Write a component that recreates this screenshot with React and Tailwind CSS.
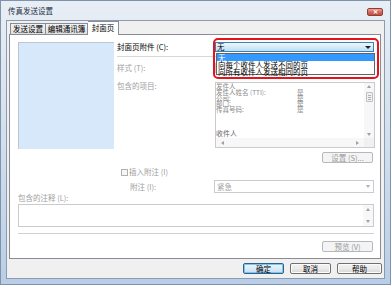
import React from "react";

const Down = ({ c = "border-t-[#404040]" }) => (
  <span className={`w-0 h-0 border-x-[3px] border-x-transparent border-t-[3px] ${c}`} />
);
const Up = ({ c = "border-b-[#a0a0a0]" }) => (
  <span className={`w-0 h-0 border-x-[2.5px] border-x-transparent border-b-[3px] ${c}`} />
);
const DownS = ({ c = "border-t-[#a0a0a0]" }) => (
  <span className={`w-0 h-0 border-x-[2.5px] border-x-transparent border-t-[3px] ${c}`} />
);
const Left = () => (
  <span className="w-0 h-0 border-y-[2.5px] border-y-transparent border-r-[3px] border-r-[#a0a0a0]" />
);
const Right = () => (
  <span className="w-0 h-0 border-y-[2.5px] border-y-transparent border-l-[3px] border-l-[#a0a0a0]" />
);

function Btn({ children, w, kind }) {
  const base = "h-[11px] flex items-center justify-center rounded-[2px] text-[7.5px] leading-none";
  if (kind === "disabled")
    return (
      <div className={`${base} h-[10px] ${w} border border-[#b6b9bb] bg-[#f4f4f4] text-[#9a9a9a]`}>{children}</div>
    );
  if (kind === "default")
    return (
      <div className={`${base} ${w} border border-[#2c628b] bg-gradient-to-b from-[#eaf5fc] via-[#dcecf8] to-[#c3def2] shadow-[inset_0_0_0_1px_#7fc6ee] text-black`}>{children}</div>
    );
  return (
    <div className={`${base} ${w} border border-[#707070] bg-gradient-to-b from-[#f2f2f2] via-[#ebebeb] to-[#d6d6d6] shadow-[inset_0_0_0_1px_#fcfcfc] text-black`}>{children}</div>
  );
}

export default function App() {
  return (
    <div className="relative w-[391px] h-[285px] overflow-hidden flex flex-col bg-gradient-to-b from-[#e8eef5] via-[#d2dfec] to-[#b9cee6] border border-[#7f93ab] font-['Noto_Sans_CJK_SC','Noto_Sans',sans-serif] text-black">
      {/* title bar */}
      <div className="h-[19px] flex items-start justify-between shrink-0">
        <div className="pl-[7px] pt-[5px] text-[7.5px] leading-[10px] text-[#1e2f45]">传真发送设置</div>
        <div className="mr-[7px] mt-[7px] w-[16px] h-[8px] rounded-[2px] border border-[#8c3f38] bg-gradient-to-b from-[#e8a59b] via-[#d46b5e] to-[#c24a3c] flex items-center justify-center">
          <span className="text-white text-[6px] leading-none font-bold">✕</span>
        </div>
      </div>

      {/* client */}
      <div className="mx-[5px] h-[259px] shrink-0 bg-[#f0f0f0] border border-[#8a9cb2] flex flex-col">
        {/* tabs */}
        <div className="h-[13px] flex items-end pl-[3px] shrink-0">
          <div className="w-[36px] h-[11px] border border-b-0 border-[#898c95] bg-gradient-to-b from-[#f2f2f2] to-[#e0e0e0] text-[7.5px] leading-[10px] flex items-center justify-center">发送设置</div>
          <div className="w-[42px] h-[11px] border border-l-0 border-b-0 border-[#898c95] bg-gradient-to-b from-[#f2f2f2] to-[#e0e0e0] text-[7.5px] leading-[10px] flex items-center justify-center">编辑通讯簿</div>
          <div className="relative z-10 -mb-px w-[31px] h-[14px] border border-b-0 border-l-0 border-[#898c95] bg-white text-[7.5px] leading-[10px] flex items-center justify-center pb-[1px]">封面页</div>
        </div>

        {/* panel */}
        <div className="ml-[2px] w-[372px] h-[225px] shrink-0 bg-white border border-[#898c95] flex flex-col">
          <div className="flex pt-[7px] pl-[8px]">
            <div className="w-[96px] h-[107px] bg-[#d7e8fb] border-l border-t border-[#b9c8d8]" />
            <div className="ml-[3px] w-[258px] flex flex-col">
              <div className="flex items-center h-[10px]">
                <div className="w-[98px] text-[7.5px] leading-[10px]">封面页附件 (C):</div>
                <div className="w-[159px] h-[10px] border border-[#3c7fb1] bg-gradient-to-b from-[#eef7fd] to-[#bfdff5] flex items-center justify-between pl-[1px] pr-[2px]">
                  <span className="text-[7.5px] leading-none">无</span>
                  <Down c="border-t-[#202020]" />
                </div>
              </div>
              <div className="mt-[4px] h-px w-full bg-[#d8d8d8]" />
              <div className="mt-[6px] flex items-center h-[10px]">
                <div className="w-[98px] text-[7.5px] leading-[10px] text-[#a0a0a0]">样式 (T):</div>
                <div className="w-[159px] h-[10px] border border-[#c8c8c8]" />
              </div>
              <div className="mt-[9px] flex">
                <div className="w-[98px] -mt-[1px] text-[7.5px] leading-[10px] text-[#a0a0a0]">包含的项目:</div>
                <div className="w-[160px] h-[66px] border border-[#c9cbcf] flex flex-col">
                  <div className="flex flex-1 min-h-0">
                    <div className="flex-1 pt-[1px] text-[6.5px] text-[#8a8a8a]">
                      <div className="leading-[5.75px] h-[5.75px]">发件人</div>
                      <div className="leading-[5.75px] h-[5.75px] flex"><span className="w-[81px]">发件人姓名 (TTI):</span><span>是</span></div>
                      <div className="leading-[5.75px] h-[5.75px] flex"><span className="w-[81px]">公司:</span><span>是</span></div>
                      <div className="leading-[5.75px] h-[5.75px] flex"><span className="w-[81px]">部门:</span><span>是</span></div>
                      <div className="leading-[5.75px] h-[5.75px] flex"><span className="w-[81px]">传真号码:</span><span>是</span></div>
                      <div className="mt-[17px] text-[7px] leading-[7px] text-[#6a6a6a]">收件人</div>
                    </div>
                    <div className="w-[10px] bg-[#f7f7f7] flex flex-col items-center">
                      <div className="h-[7px] flex items-center"><Up /></div>
                      <div className="mt-[2px] w-[7px] h-[10px] border border-[#c0c0c0] bg-[#f0f0f0] rounded-[1px] flex flex-col items-center justify-center gap-[1px]">
                        <span className="w-[3px] h-px bg-[#b0b0b0]" />
                        <span className="w-[3px] h-px bg-[#b0b0b0]" />
                        <span className="w-[3px] h-px bg-[#b0b0b0]" />
                      </div>
                      <div className="flex-1" />
                      <div className="h-[7px] flex items-center"><DownS /></div>
                    </div>
                  </div>
                  <div className="h-[9px] flex bg-[#f7f7f7]">
                    <div className="flex-1 flex items-center justify-between px-[5px]">
                      <Left />
                      <Right />
                    </div>
                    <div className="w-[10px] bg-[#f0f0f0]" />
                  </div>
                </div>
              </div>
              <div className="mt-[4px] self-end mr-[2px]">
                <Btn w="w-[51px]" kind="disabled">设置 (S)...</Btn>
              </div>
            </div>
          </div>

          <div className="mt-[5px] pl-[111px] flex items-center h-[8px]">
            <span className="w-[7px] h-[7px] border border-[#b0b0b0] bg-[#f6f6f6]" />
            <span className="ml-[1px] text-[7.5px] leading-[8px] text-[#a0a0a0]">插入附注 (I)</span>
          </div>
          <div className="mt-[4px] pl-[120px] flex items-center h-[13px]">
            <div className="w-[84px] text-[7.5px] leading-[10px] text-[#a0a0a0]">附注 (I):</div>
            <div className="w-[160px] h-[13px] border border-[#c9cbcf] flex items-center justify-between pl-[2px] pr-[3px]">
              <span className="text-[7.5px] leading-none text-[#a0a0a0]">紧急</span>
              <DownS c="border-t-[#b0b0b0]" />
            </div>
          </div>
          <div className="pl-[8px] text-[7.5px] leading-[10px] h-[10px] text-[#a0a0a0]">包含的注释 (L):</div>
          <div className="mt-[1px] ml-[8px] w-[356px] h-[23px] border border-[#c9cbcf] flex justify-end">
            <div className="w-[10px] h-full bg-[#f7f7f7] flex flex-col items-center justify-between py-[3px]">
              <Up />
              <DownS />
            </div>
          </div>
          <div className="mt-[6px] ml-[8px] w-[356px] h-px bg-[#d0d0d0]" />
          <div className="mt-[7px] self-end mr-[7px]">
            <Btn w="w-[51px]" kind="disabled">预览 (V)</Btn>
          </div>
        </div>

        {/* buttons */}
        <div className="mt-[4px] flex justify-end pr-[2px] gap-[6px]">
          <Btn w="w-[41px]" kind="default">确定</Btn>
          <Btn w="w-[41px]">取消</Btn>
          <Btn w="w-[45px]">帮助</Btn>
        </div>
      </div>

      {/* dropdown list overlay */}
      <div className="absolute left-[215px] top-[52px] w-[159px] h-[22px] bg-white border border-[#646464] text-[7.5px] leading-[7px]">
        <div className="h-[7px] bg-[#3399ff] text-white pl-[1px]">无</div>
        <div className="h-[7px] pl-[1px]">向每个收件人发送不同的页</div>
        <div className="h-[7px] pl-[1px]">向所有收件人发送相同的页</div>
      </div>
      {/* red highlight */}
      <div className="absolute left-[212px] top-[37px] w-[166px] h-[41px] rounded-[5px] border-2 border-[#e5131b]" />
    </div>
  );
}
